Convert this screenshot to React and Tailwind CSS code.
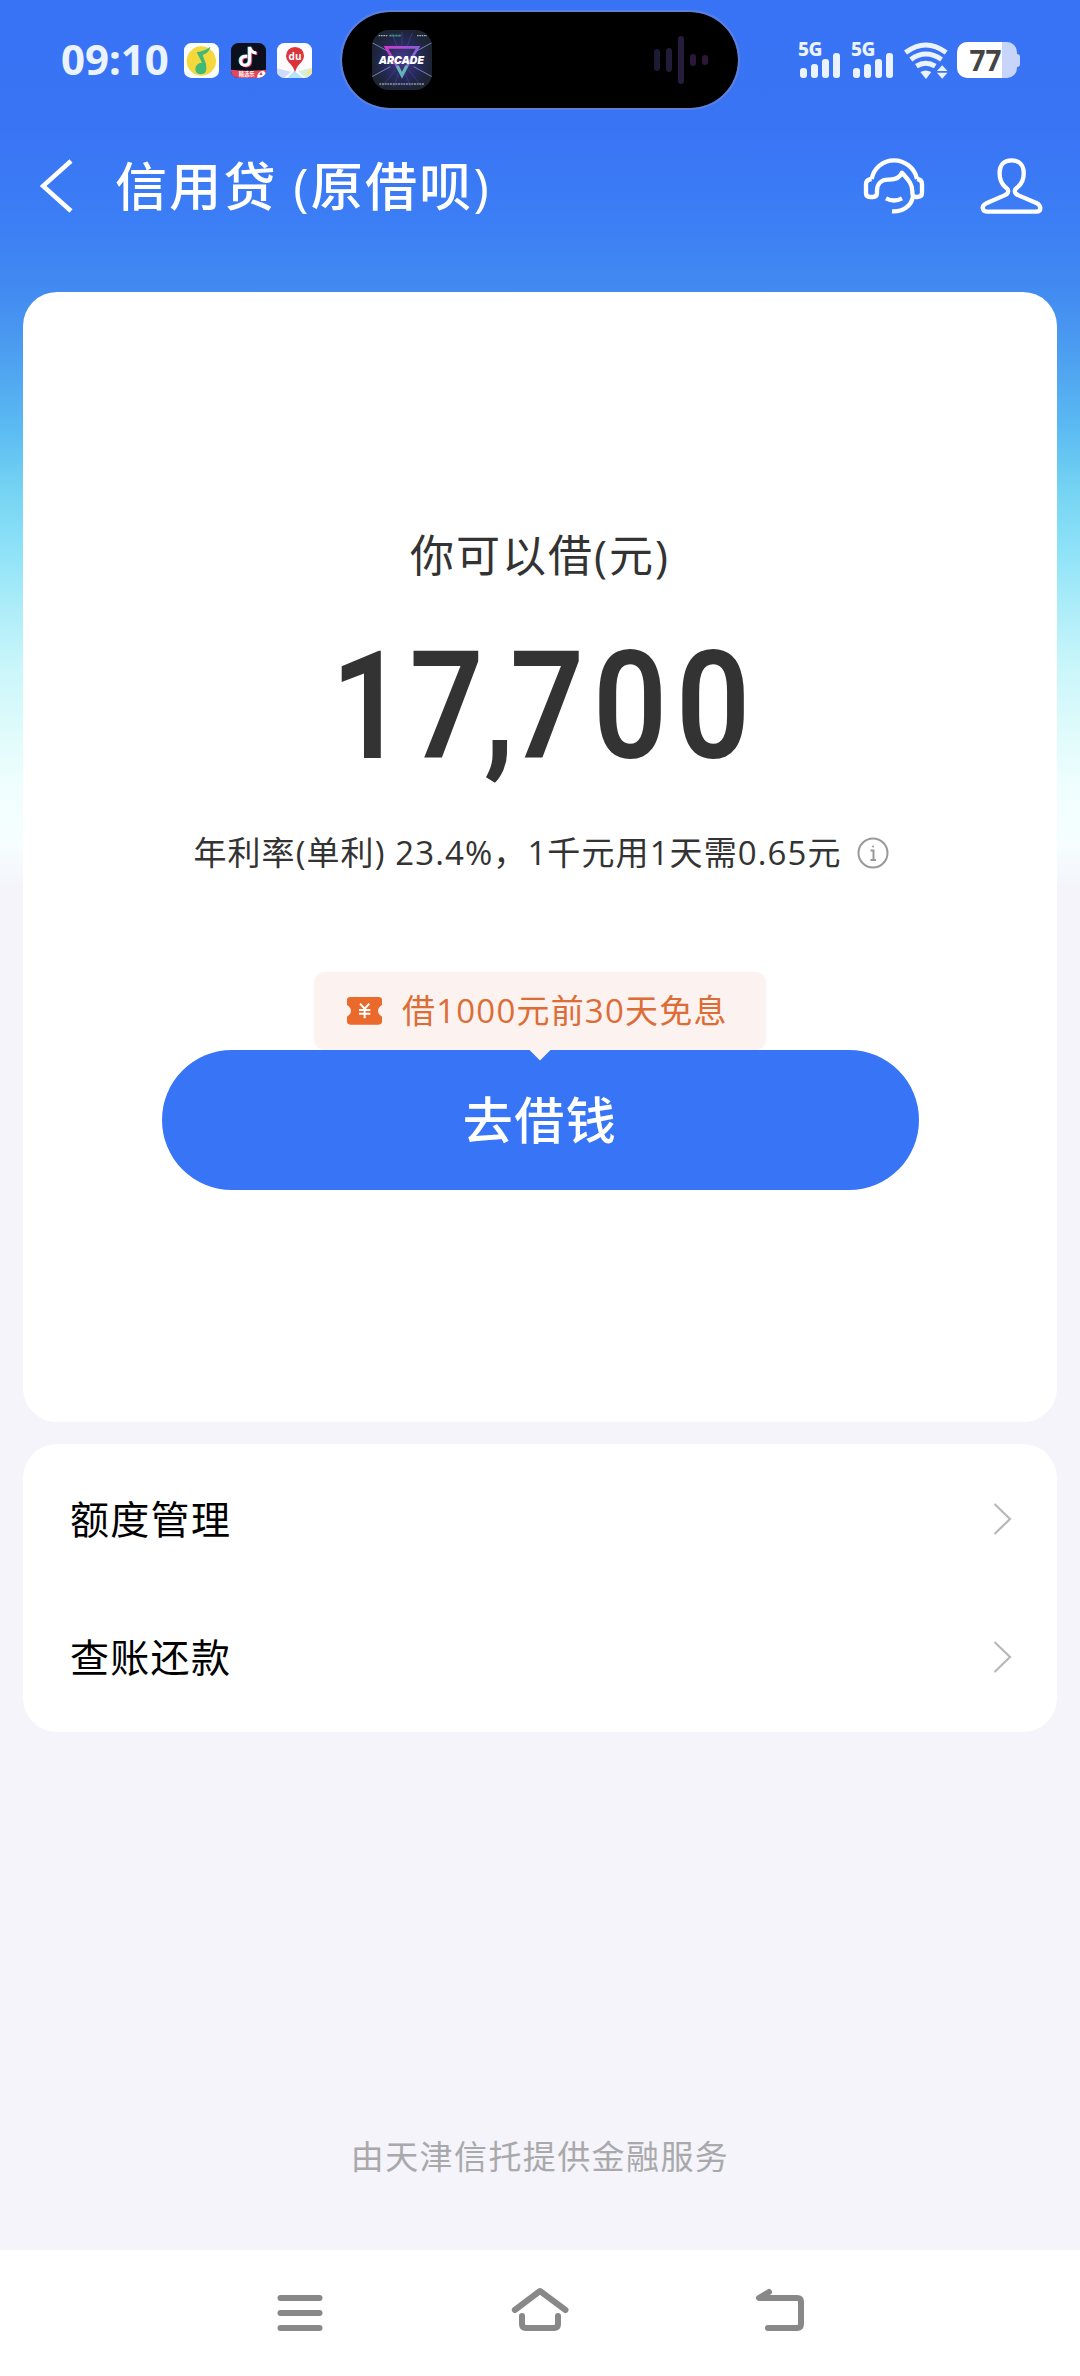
import { useState } from 'react';

const menuItems = ['额度管理', '查账还款'];

const amount = [
  { char: '1', box: 'w-[90px]' },
  { char: '7,', box: 'w-[97px]' },
  { char: '7', box: 'w-[74px]' },
  { char: '0', box: 'w-[92px]' },
  { char: '0', box: 'w-[74px]' },
];

function MusicIcon() {
  return (
    <svg viewBox="0 0 105 105" className="h-[35px] w-[35px]">
      <rect width="105" height="105" rx="22" fill="#fbfefa" />
      <circle cx="52" cy="54" r="44" fill="#f5d83c" />
      <path d="M38 28 Q62 24 79 11 Q77 28 56 36 L66 64 Q72 94 50 94 Q34 92 34 77 Q36 60 54 59 Z" fill="#3fba78" />
    </svg>
  );
}

function TiktokIcon() {
  return (
    <svg viewBox="0 0 105 105" className="h-[35px] w-[35px]">
      <defs>
        <clipPath id="tk">
          <rect width="105" height="105" rx="22" />
        </clipPath>
      </defs>
      <g clipPath="url(#tk)">
        <rect width="105" height="105" fill="#0c0f1c" />
        <g fill="none" strokeWidth="9">
          <path d="M49 40 Q29 39 29 54 Q30 67 43 67 Q56 66 56 52 V12 Q59 28 76 30" stroke="#4fd6dc" transform="translate(-2 -1)" />
          <path d="M49 40 Q29 39 29 54 Q30 67 43 67 Q56 66 56 52 V12 Q59 28 76 30" stroke="#e84b68" transform="translate(3 2)" />
          <path d="M49 40 Q29 39 29 54 Q30 67 43 67 Q56 66 56 52 V12 Q59 28 76 30" stroke="#fff" />
        </g>
        <path d="M0 80 Q50 86 105 80 V105 H0 Z" fill="#e2475b" />
        <text x="23" y="98" fill="#fff" fontSize="16" fontWeight="700" fontFamily="Noto Sans CJK SC, sans-serif">精选乐</text>
        <path d="M78 104 Q80 84 97 83 L105 90 V105 Z" fill="#fff" />
        <path d="M90 86 L95 96 H85 Z" fill="#e2475b" />
      </g>
    </svg>
  );
}

function MapIcon() {
  return (
    <svg viewBox="0 0 105 105" className="h-[35px] w-[35px]">
      <defs>
        <clipPath id="mp">
          <rect width="105" height="105" rx="22" />
        </clipPath>
      </defs>
      <g clipPath="url(#mp)">
        <rect width="105" height="105" fill="#fdfdff" />
        <path d="M0 76 L42 86 L22 105 H0 Z" fill="#cfdcfb" />
        <path d="M52 84 L30 105 H78 Z" fill="#b5e4fb" />
        <path d="M64 84 L105 74 V105 H84 Z" fill="#d5f0dd" />
        <path d="M84 90 L105 76 V92 L96 97 Z" fill="#f7e29a" />
      </g>
      <path d="M54 88 Q49 70 35 58 Q27 49 27 39 Q29 13 54 12 Q80 13 81 39 Q81 49 73 58 Q59 70 54 88 Z" fill="#d9353b" />
      <text x="54" y="51" textAnchor="middle" fill="#fff" fontSize="30" fontWeight="700" fontFamily="Open Sans, sans-serif">du</text>
    </svg>
  );
}

function ArcadeCover() {
  return (
    <svg viewBox="0 0 180 180" className="h-[60px] w-[60px]">
      <defs>
        <radialGradient id="cover">
          <stop offset="0" stopColor="#4a3a8c" />
          <stop offset="0.6" stopColor="#252a5c" />
          <stop offset="1" stopColor="#1d2433" />
        </radialGradient>
        <linearGradient id="tri" x1="0" x2="1" y1="0" y2="1">
          <stop offset="0" stopColor="#d338c8" />
          <stop offset="0.5" stopColor="#8a5fd0" />
          <stop offset="1" stopColor="#4fc0d0" />
        </linearGradient>
        <clipPath id="cv">
          <rect width="180" height="180" rx="50" />
        </clipPath>
      </defs>
      <g clipPath="url(#cv)">
        <rect width="180" height="180" fill="url(#cover)" />
        <path d="M0 38 L50 65 M180 38 L130 65 M0 140 L55 110 M180 140 L125 110" stroke="#7a80ab" strokeWidth="3" />
        <path d="M60 10 L75 50 M90 5 V45 M120 10 L105 50 M30 170 L70 120 M150 170 L110 120 M65 170 L80 130 M115 170 L100 130" stroke="#4b4390" strokeWidth="2" />
        <path d="M20 17 H46 M135 17 H165" stroke="#aab" strokeWidth="4" strokeDasharray="5 2" />
        <path d="M52 17 H88" stroke="#3f9c86" strokeWidth="5" strokeDasharray="7 2" />
        <path d="M22 162 H158" stroke="#8d93a8" strokeWidth="5" strokeDasharray="6 2" />
        <path d="M42 52 H138 L90 134 Z" fill="none" stroke="url(#tri)" strokeWidth="8" />
        <path d="M76 108 L90 136 L104 108" fill="none" stroke="#62b5b4" strokeWidth="9" />
        <text x="20" y="102" textLength="136" lengthAdjust="spacingAndGlyphs" fill="#fff" fontSize="33" fontWeight="900" fontStyle="italic" fontFamily="Inter, sans-serif">ARCADE</text>
      </g>
    </svg>
  );
}

function Signal() {
  return (
    <div className="relative h-9 w-[43px]">
      <span className="absolute -top-[1px] left-0 font-['Noto_Sans'] text-[19px] font-extrabold leading-[17px] tracking-[-0.5px] text-[#eaf3ff]">5G</span>
      <div className="flex h-full items-end gap-[4.5px] pl-[2px]">
        <i className="h-[10px] w-[6.5px] rounded-[3px] bg-[#eaf3ff]" />
        <i className="h-[14px] w-[6.5px] rounded-[3px] bg-[#eaf3ff]" />
        <i className="h-[19px] w-[6.5px] rounded-[3px] bg-[#eaf3ff]" />
        <i className="h-[25px] w-[6.5px] rounded-[3px] bg-[#eaf3ff]" />
      </div>
    </div>
  );
}

function StatusBar() {
  return (
    <div className="relative flex h-[120px] items-center justify-between pl-[60px] pr-[60px]">
      <div className="flex items-center">
        <span className="w-[124px] pb-[3px] pl-[1px] font-['Noto_Sans'] text-[42px] font-bold leading-[36px] text-[#eaf3ff]">09:10</span>
        <div className="flex gap-[11.5px]">
          <MusicIcon />
          <TiktokIcon />
          <MapIcon />
        </div>
      </div>

      <div className="absolute left-[342px] top-3 flex h-24 w-[396px] items-center justify-between rounded-full bg-black pl-[30px] pr-[30px] outline-2 outline-[#5a80dc]">
        <ArcadeCover />
        <div className="flex items-center gap-1.5">
          <i className="h-[22px] w-1.5 rounded-full bg-[#1b1c33]" />
          <i className="h-6 w-1.5 rounded-full bg-[#211d38]" />
          <i className="h-12 w-1.5 rounded-full bg-[#251d3b]" />
          <i className="h-3 w-1.5 rounded-full bg-[#291838]" />
          <i className="h-2.5 w-1.5 rounded-full bg-[#2d1734]" />
        </div>
      </div>

      <div className="flex items-center">
        <div className="flex gap-[10px]">
          <Signal />
          <Signal />
        </div>
        <svg viewBox="488 120 138 118" className="ml-[9px] h-[39px] w-[46px]" fill="none" stroke="#eaf3ff" strokeWidth="15">
          <path d="M495 155 Q556 109 618 155" />
          <path d="M511 176 Q556 143 604 176" />
          <path d="M528 196 Q556 178 585 196" />
          <path d="M540 214 Q556 204 573 214 L557 235 Z" fill="#eaf3ff" stroke="none" />
          <path d="M606 193 L622 211 H590 Z M590 216 H622 L606 234 Z" fill="#eaf3ff" stroke="none" />
        </svg>
        <div className="ml-[8px] flex items-center">
          <div className="flex h-9 w-[60px] items-center justify-center overflow-hidden rounded-[10px] bg-[linear-gradient(90deg,#fff_75%,#c8d5fb_75%)] font-['Noto_Sans'] text-[28px] font-bold leading-none text-[#444]">
            <span className="-ml-[3px]">77</span>
          </div>
          <i className="h-[13px] w-[3px] rounded-r-[3px] bg-[#c8d5fb]" />
        </div>
      </div>
    </div>
  );
}

function Header() {
  return (
    <header className="flex h-[132px] items-center pl-[40px] pr-[37px] text-white">
      <svg viewBox="0 0 33 54" className="h-[54px] w-[33px]" fill="none" stroke="currentColor" strokeWidth="4.5">
        <path d="M31 2 L3 27 L31 52" />
      </svg>
      <h1 className="ml-[42px] pb-[1px] text-[52px] font-medium leading-[60px] tracking-[2.2px]">信用贷 (原借呗)</h1>
      <div className="ml-auto flex items-center gap-[55px]">
        <svg viewBox="369 472 186 174" className="h-[58px] w-[62px]" fill="none" stroke="currentColor" strokeWidth="13" strokeLinejoin="round">
          <path d="M395 538 C401 505 429 482 462 482 C495 482 524 505 531 538" />
          <path d="M395 538 Q378 540 378 553 V580 Q378 592 390 592 H399 Q411 592 411 580 V573 C411 552 425 540 444 540 C466 541 480 534 486 519 C508 543 517 555 517 575 V580 Q518 592 527 592 H532 Q546 591 546 580 V553 Q546 540 531 538" />
          <path d="M519 590 C514 620 488 637 456 635" />
          <path d="M438 596 Q462 609 486 596" />
        </svg>
        <svg viewBox="718 472 190 174" className="h-[58px] w-[63px]" fill="none" stroke="currentColor" strokeWidth="13" strokeLinejoin="round">
          <path d="M813 482 C790 482 777 496 777 520 C777 543 784 554 795 563 Q808 573 800 582 Q797 585 790 588 L739 610 Q726 616 726 625 Q727 636 739 636 H888 Q900 636 900 625 Q899 616 888 610 L836 588 Q829 585 826 582 Q818 573 831 563 C843 554 850 543 850 520 C850 496 836 482 813 482 Z" />
        </svg>
      </div>
    </header>
  );
}

function Amount() {
  return (
    <div className="mt-[10px] flex h-[130px] items-center justify-center pr-[7px] font-['Roboto'] text-[151px] font-semibold leading-none text-[#333]">
      {amount.map((item, index) => (
        <span key={index} className={`flex justify-center ${item.box}`}>
          <span className="inline-block scale-x-[0.86]">{item.char}</span>
        </span>
      ))}
    </div>
  );
}

function NavBar() {
  return (
    <nav className="flex h-[126px] items-center justify-between bg-white px-[270px] text-[#888]">
      <svg viewBox="270 2283 60 60" className="h-[60px] w-[60px]" fill="none" stroke="currentColor" strokeWidth="6" strokeLinecap="round">
        <path d="M280.500 2298 H319.500 M280.500 2313 H319.500 M280.500 2328 H319.500" />
      </svg>
      <svg viewBox="510 2283 60 60" className="h-[60px] w-[60px]" fill="none" stroke="currentColor" strokeWidth="6" strokeLinecap="round" strokeLinejoin="round">
        <path d="M514.800 2310 L540 2291 L565.500 2310" />
        <path d="M522 2316 V2324 Q522 2328 526 2328 H554 Q558 2328 558 2324 V2316" />
      </svg>
      <svg viewBox="750 2283 60 60" className="h-[60px] w-[60px]" fill="none" stroke="currentColor" strokeWidth="6" strokeLinecap="round" strokeLinejoin="round">
        <path d="M769 2292 L759 2298 H797 Q801 2298 801 2302 V2324 Q801 2328 797 2328 H768" />
      </svg>
    </nav>
  );
}

export default function App() {
  const [active, setActive] = useState(null);

  return (
    <main className="flex h-[2376px] w-[1080px] flex-col overflow-hidden bg-[#f4f4fa] bg-[linear-gradient(180deg,#3973f5_0px,#3974f5_130px,#3c7ef5_220px,#428bf1_292px,#4c9df0_350px,#5cbbf2_430px,#73d2f2_485px,#8ee2f8_550px,#abecf8_605px,#c9f6fb_665px,#e0fbfb_735px,#f0fefe_790px,#f6feff_845px,#f4f4fa_890px)] font-['Open_Sans','Noto_Sans_CJK_SC',sans-serif]">
      <StatusBar />
      <Header />

      <section className="mx-[23px] mt-10 flex h-[1130px] flex-col items-center rounded-[34px] bg-white">
        <p className="mt-[233px] text-[44px] leading-[60px] tracking-[2px] text-[#333]">你可以借(元)</p>
        <div className="mt-[46px]">
          <Amount />
        </div>
        <div className="mt-[57px] flex items-center pl-[2px] text-[#333]">
          <p className="whitespace-nowrap text-[33px] leading-[50px] tracking-[1.1px]">年利率(单利) 23.4%，1千元用1天需0.65元</p>
          <svg viewBox="0 0 32 32" className="ml-[15px] h-8 w-8" fill="none" stroke="#999" strokeWidth="2">
            <circle cx="16" cy="16" r="14.5" />
            <path d="M13.500 13.500 H16.500 V23 M13.500 23 H19" />
            <circle cx="16" cy="9.500" r="1" fill="#999" stroke="none" />
          </svg>
        </div>

        <div className="relative mt-[94px] flex h-[78px] w-[452px] items-center rounded-[10px] bg-[#fcf2ef] pl-[33px] text-[#dd6c36]">
          <svg viewBox="0 0 105 84" className="h-7 w-[35px]">
            <path d="M10 0 H95 Q105 0 105 10 V24 Q93 32 93 42 Q93 51 105 59 V73 Q105 83 95 83 H10 Q0 83 0 73 V59 Q12 51 12 42 Q12 32 0 24 V10 Q0 0 10 0 Z" fill="#e96a2b" />
            <path d="M39 20 L53 35 L67 20 M53 35 V64 M36 39 H70 M36 50 H70" fill="none" stroke="#fff" strokeWidth="6" />
          </svg>
          <span className="ml-[20px] whitespace-nowrap text-[33px] leading-[50px] tracking-[1.2px]">借1000元前30天免息</span>
          <i className="absolute left-[215px] top-[77.500px] h-[11px] w-[22px] bg-[#fcf2ef] [clip-path:polygon(0_0,100%_0,50%_100%)]" />
        </div>
        <button type="button" className="h-[140px] w-[757px] rounded-full bg-[#3875f6] text-[50px] font-medium leading-none tracking-[1.5px] text-white">
          去借钱
        </button>
      </section>

      <section className="mx-[23px] mt-[22px] rounded-[34px] bg-white py-1.5">
        {menuItems.map((item) => (
          <button
            key={item}
            type="button"
            aria-pressed={active === item}
            onClick={() => setActive(item)}
            className="flex h-[138px] w-full items-center justify-between pl-[47px] pr-[45px] text-[39px] leading-none tracking-[1.3px] text-black"
          >
            <span className="pb-[2px]">{item}</span>
            <svg viewBox="0 0 19 34" className="h-[34px] w-[19px]" fill="none" stroke="#b8b8b8" strokeWidth="2.2">
              <path d="M1.500 2 L17 17 L1.500 32" />
            </svg>
          </button>
        ))}
      </section>

      <p className="mt-auto mb-[68px] text-center text-[33px] leading-[50px] tracking-[1.4px] text-[#a9a9ac]">由天津信托提供金融服务</p>
      <NavBar />
    </main>
  );
}
